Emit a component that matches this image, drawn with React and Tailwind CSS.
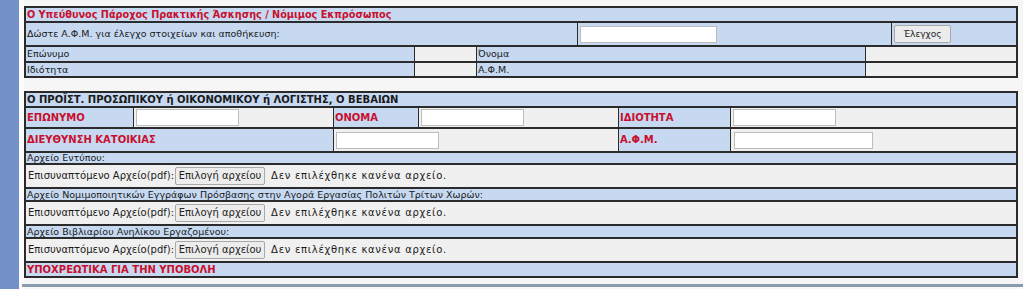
import React from "react";

const blue = "bg-[#c6d9f1]";
const gray = "bg-[#f0f0f0]";

function Input({ w }) {
  return <div className={`h-[17px] bg-white border border-[#bdbdbd] ${w}`} />;
}

function FileRow() {
  return (
    <div className={`h-[24px] ${gray} border-b-2 border-[#2b2b2b] flex items-center pl-[2px] text-[10px] text-[#1a1a1a]`}>
      <span>Επισυναπτόμενο Αρχείο(pdf):</span>
      <div className="ml-[1px] h-[18px] w-[90px] flex items-center justify-center bg-[#ececec] border border-[#a9a9a9] rounded-[2px] text-[#222]">
        Επιλογή αρχείου
      </div>
      <span className="ml-[6px] tracking-[0.7px]">Δεν επιλέχθηκε κανένα αρχείο.</span>
    </div>
  );
}

function HeadRow({ children, h = "h-[13px]" }) {
  return (
    <div className={`${h} ${blue} border-b-2 border-[#2b2b2b] flex items-center pl-[1px] text-[9.5px] text-[#1a1a1a]`}>
      {children}
    </div>
  );
}

export default function App() {
  return (
    <div className="w-[1023px] h-[289px] bg-[#f6f6f6] flex font-['DejaVu_Sans',Verdana,sans-serif] text-[9.5px] leading-none overflow-hidden">
      <div className="w-[19px] shrink-0 bg-[#7391c9]" />
      <div className="w-[5px] shrink-0 bg-[#fbfbfb]" />
      <div className="w-[994px] shrink-0 flex flex-col">
        {/* Section 1 */}
        <div className="mt-[6px] border-t-2 border-x-2 border-[#2b2b2b] flex flex-col">
          <div className={`h-[15px] ${blue} border-b-2 border-[#2b2b2b] flex items-center pl-[1px] font-bold text-[9.7px] text-[#c8102e]`}>
            Ο Υπεύθυνος Πάροχος Πρακτικής Άσκησης / Νόμιμος Εκπρόσωπος
          </div>
          <div className={`h-[24px] ${blue} border-b-2 border-[#2b2b2b] flex text-[#1a1a1a]`}>
            <div className="w-[551px] flex items-center pl-[1px]">
              Δώστε Α.Φ.Μ. για έλεγχο στοιχείων και αποθήκευση:
            </div>
            <div className="w-[314px] border-l border-[#2b2b2b] flex items-center pl-[2px]">
              <Input w="w-[137px]" />
            </div>
            <div className="flex-1 border-l border-[#2b2b2b] flex items-center pl-[2px]">
              <div className="h-[18px] w-[57px] flex items-center justify-center bg-[#ececec] border border-[#a9a9a9] rounded-[2px] text-[9px] text-[#222]">
                Έλεγχος
              </div>
            </div>
          </div>
          <div className="h-[16px] border-b-2 border-[#2b2b2b] flex text-[#1a1a1a]">
            <div className={`w-[388px] ${blue} flex items-center pl-[1px]`}>Επώνυμο</div>
            <div className={`w-[62px] ${gray} border-l border-[#2b2b2b]`} />
            <div className={`w-[389px] ${blue} border-l border-[#2b2b2b] flex items-center pl-[1px]`}>Όνομα</div>
            <div className={`flex-1 ${gray} border-l border-[#2b2b2b]`} />
          </div>
          <div className="h-[15px] border-b-2 border-[#2b2b2b] flex text-[#1a1a1a]">
            <div className={`w-[388px] ${blue} flex items-center pl-[1px]`}>Ιδιότητα</div>
            <div className={`w-[62px] ${gray} border-l border-[#2b2b2b]`} />
            <div className={`w-[389px] ${blue} border-l border-[#2b2b2b] flex items-center pl-[1px]`}>Α.Φ.Μ.</div>
            <div className={`flex-1 ${gray} border-l border-[#2b2b2b]`} />
          </div>
        </div>

        {/* Section 2 */}
        <div className="mt-[13px] border-t-2 border-x-2 border-[#2b2b2b] flex flex-col">
          <div className={`h-[15px] ${blue} border-b-2 border-[#2b2b2b] flex items-center pl-[1px] text-[10px] font-bold text-[#1a1a1a]`}>
            Ο ΠΡΟΪΣΤ. ΠΡΟΣΩΠΙΚΟΥ ή ΟΙΚΟΝΟΜΙΚΟΥ ή ΛΟΓΙΣΤΗΣ, Ο ΒΕΒΑΙΩΝ
          </div>
          <div className="h-[21px] border-b-2 border-[#2b2b2b] flex text-[10px] font-bold text-[#c8102e]">
            <div className={`w-[107px] ${blue} flex items-center pl-[1px]`}>ΕΠΩΝΥΜΟ</div>
            <div className={`w-[200px] ${gray} border-l border-[#2b2b2b] flex items-center pl-[2px]`}>
              <Input w="w-[103px]" />
            </div>
            <div className={`w-[85px] ${blue} border-l border-[#2b2b2b] flex items-center pl-[1px]`}>ΟΝΟΜΑ</div>
            <div className={`w-[200px] ${gray} border-l border-[#2b2b2b] flex items-center pl-[2px]`}>
              <Input w="w-[103px]" />
            </div>
            <div className={`w-[112px] ${blue} border-l border-[#2b2b2b] flex items-center pl-[1px]`}>ΙΔΙΟΤΗΤΑ</div>
            <div className={`flex-1 ${gray} border-l border-[#2b2b2b] flex items-center pl-[2px]`}>
              <Input w="w-[103px]" />
            </div>
          </div>
          <div className="h-[24px] border-b-2 border-[#2b2b2b] flex text-[10px] font-bold text-[#c8102e]">
            <div className={`w-[307px] ${blue} flex items-center pl-[1px]`}>ΔΙΕΥΘΥΝΣΗ ΚΑΤΟΙΚΙΑΣ</div>
            <div className={`w-[285px] ${gray} border-l border-[#2b2b2b] flex items-center pl-[2px]`}>
              <Input w="w-[103px]" />
            </div>
            <div className={`w-[112px] ${blue} border-l border-[#2b2b2b] flex items-center pl-[1px]`}>Α.Φ.Μ.</div>
            <div className={`flex-1 ${gray} border-l border-[#2b2b2b] flex items-center pl-[3px]`}>
              <Input w="w-[139px]" />
            </div>
          </div>
          <HeadRow h="h-[12px]">Αρχείο Εντύπου:</HeadRow>
          <FileRow />
          <HeadRow>Αρχείο Νομιμοποιητικών Εγγράφων Πρόσβασης στην Αγορά Εργασίας Πολιτών Τρίτων Χωρών:</HeadRow>
          <FileRow />
          <HeadRow>Αρχείο Βιβλιαρίου Ανηλίκου Εργαζομένου:</HeadRow>
          <FileRow />
          <div className={`h-[15px] ${blue} border-b-2 border-[#2b2b2b] flex items-center pl-[1px] text-[10px] font-bold text-[#c8102e]`}>
            ΥΠΟΧΡΕΩΤΙΚΑ ΓΙΑ ΤΗΝ ΥΠΟΒΟΛΗ
          </div>
        </div>
        <div className="mt-[6px] -ml-[2px] w-[1001px] h-[3px] bg-[#8a9bab]" />
      </div>
    </div>
  );
}
